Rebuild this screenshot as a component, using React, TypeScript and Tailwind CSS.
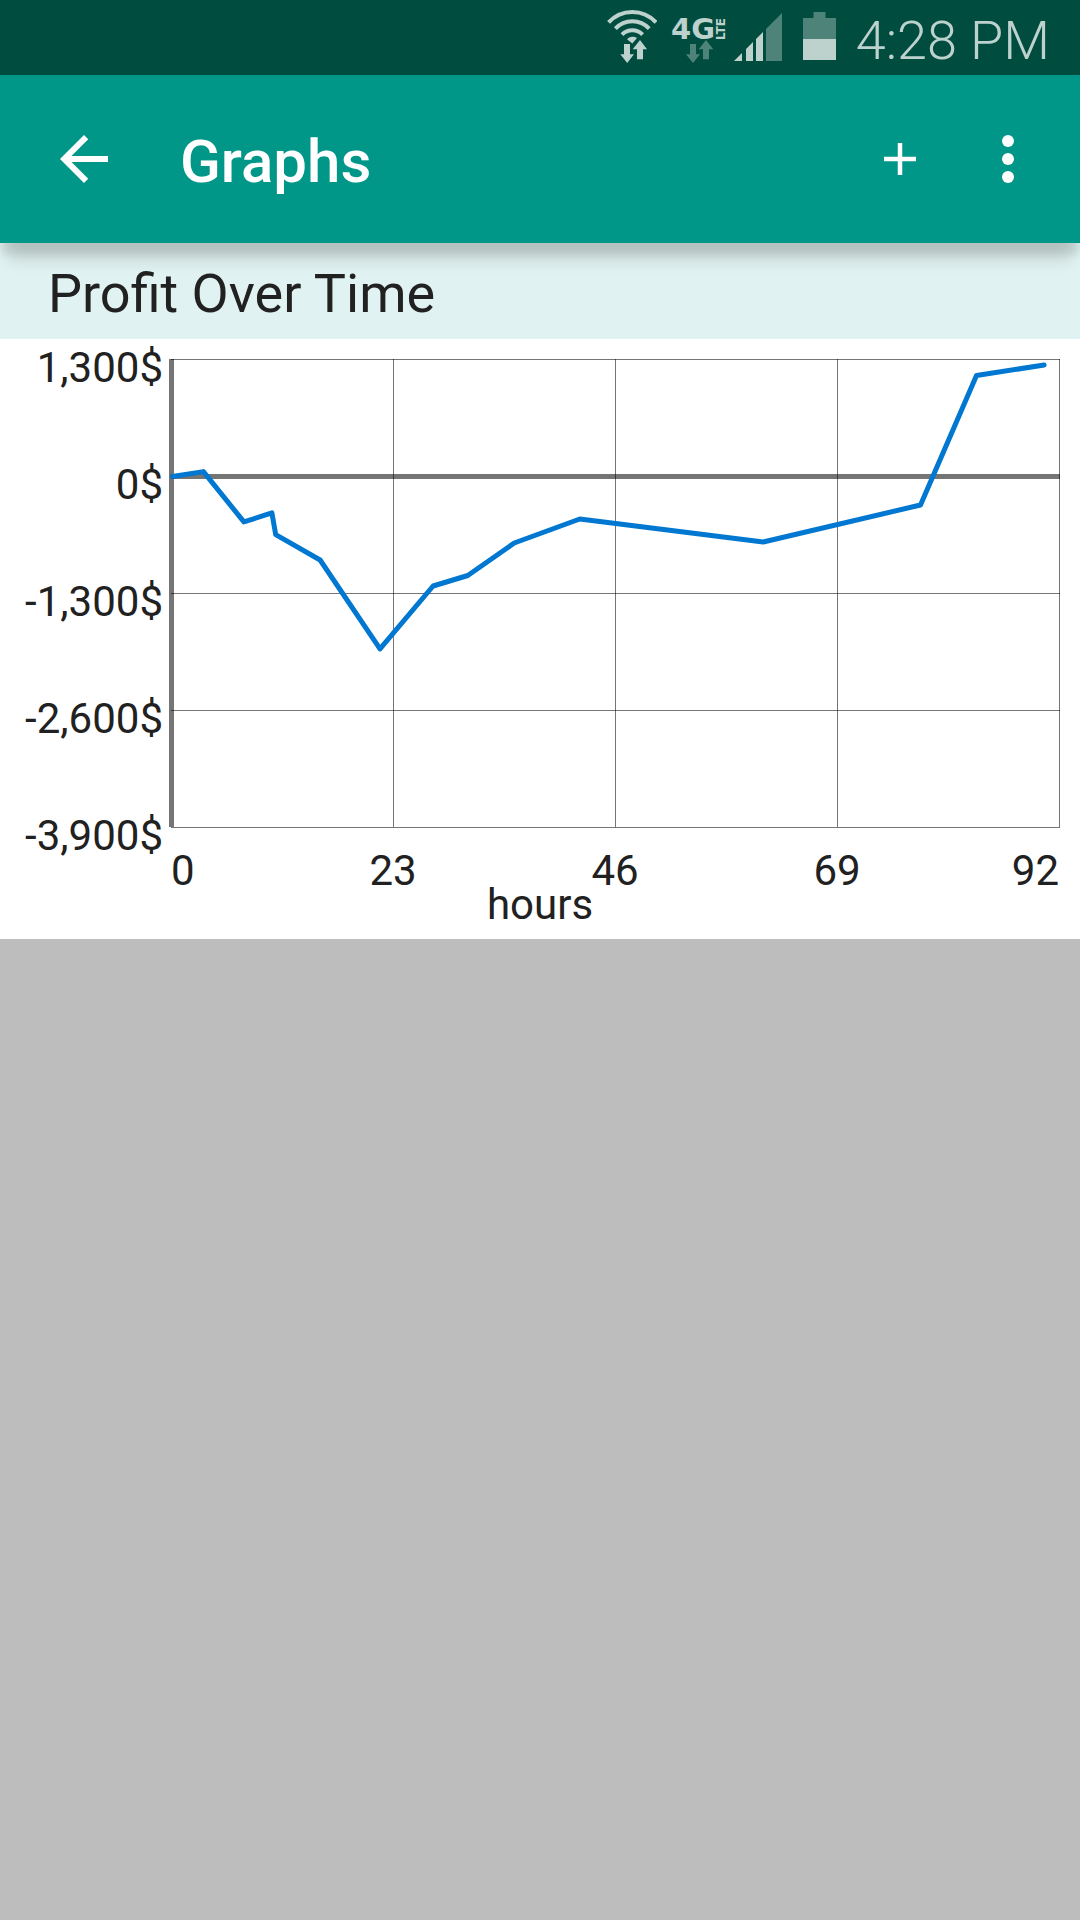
const points: [number, number][] = [
  [0.1, 0],
  [3.3, 55],
  [7.5, -505],
  [10.4, -405],
  [10.8, -645],
  [15.4, -928],
  [21.6, -1916],
  [27.1, -1217],
  [30.7, -1100],
  [35.5, -739],
  [42.3, -472],
  [61.3, -728],
  [77.6, -317],
  [83.4, 1122],
  [90.4, 1239],
];

const yLabels = ["1,300$", "0$", "-1,300$", "-2,600$", "-3,900$"];
const xLabels = ["0", "23", "46", "69", "92"];

const PLOT_W = 888;
const PLOT_H = 468;
const toX = (hours: number) => (hours / 92) * PLOT_W + 0.5;
const toY = (dollars: number) => ((1300 - dollars) / 5200) * PLOT_H + 0.5;
const linePoints = points.map(([h, d]) => `${toX(h).toFixed(1)},${toY(d).toFixed(1)}`).join(" ");

function WifiIcon() {
  return (
    <svg aria-label="Wi-Fi" className="mr-[14px] h-[75px] w-[50px] shrink-0" viewBox="0 0 50 75" fill="none">
      <g stroke="#bdd1cd" strokeWidth="4">
        <path d="M1.6 22.4A32 32 0 0 1 49 22.4" />
        <path d="M8.4 28.6A23 23 0 0 1 42.2 28.6" />
        <path d="M15 34.7A14.3 14.3 0 0 1 35.6 34.7" />
      </g>
      <g fill="#bdd1cd">
        <path d="M20 39.3A7.5 7.5 0 0 1 30 38L25.3 43.5Z" />
        <path d="M17 44H23V54.3H27L20.2 63L13.3 54.3H17Z" />
        <path d="M33 40L40 49.3H36V59.3H30V49.3H25.7Z" />
      </g>
    </svg>
  );
}

function NetworkIcon() {
  return (
    <svg aria-label="4G LTE" className="mr-2 h-[75px] w-[55px] shrink-0 overflow-visible" viewBox="0 0 55 75">
      <g fill="#bdd1cd" fontFamily="'DejaVu Sans', sans-serif" fontWeight="700">
        <text x="0" y="39" fontSize="29">4G</text>
        <text transform="translate(54 40) rotate(-90)" fontSize="12">LTE</text>
      </g>
      <g fill="#4d8379">
        <path d="M19 44H25V54.3H29L22 63L15 54.3H19Z" />
        <path d="M35 40L42.3 49.3H38V59.3H32V49.3H27.7Z" />
      </g>
    </svg>
  );
}

function SignalIcon() {
  return (
    <svg aria-label="Signal strength" className="mr-5 h-[75px] w-[49px] shrink-0" viewBox="0 0 49 75">
      <path fill="#bdd1cd" d="M0 61L8 53V61ZM12 61V49L19 42V61ZM22 61V39L29 32V61Z" />
      <path fill="#4d8379" d="M32 61V29L48 13V61Z" />
    </svg>
  );
}

function BatteryIcon() {
  return (
    <svg aria-label="Battery" className="mr-5 h-[75px] w-[33px] shrink-0" viewBox="0 0 33 75">
      <path fill="#4d8379" d="M0 18H10.5V12H22.5V18H33V39H0Z" />
      <path fill="#bdd1cd" d="M0 39H33V60H0Z" />
    </svg>
  );
}

function StatusBar() {
  return (
    <div className="flex h-[75px] items-center justify-end bg-[#004d40] pr-[30px]">
      <WifiIcon />
      <NetworkIcon />
      <SignalIcon />
      <BatteryIcon />
      <span className="pt-[6px] text-[54px] leading-none font-light whitespace-nowrap text-[#bdd1cd]">4:28 PM</span>
    </div>
  );
}

function Toolbar() {
  return (
    <header className="relative z-10 flex h-[168px] items-center bg-[#009688] pr-9 pl-12 text-white shadow-[0_12px_8px_-1px_rgba(0,0,0,0.1),0_26px_14px_-8px_rgba(0,0,0,0.11)]">
      <button type="button" aria-label="Back" className="size-[72px] shrink-0">
        <svg className="size-full" viewBox="0 0 24 24" fill="currentColor">
          <path d="M20 11H7.83l5.59-5.59L12 4l-8 8 8 8 1.41-1.41L7.83 13H20v-2z" />
        </svg>
      </button>
      <h1 className="ml-15 flex-1 pt-[6px] text-[60px] leading-none font-medium">Graphs</h1>
      <button type="button" aria-label="Add graph" className="mr-9 size-[72px] shrink-0">
        <svg className="size-full" viewBox="0 0 72 72" stroke="currentColor" strokeWidth="4.5">
          <path d="M20 36H52M36 20V52" />
        </svg>
      </button>
      <button type="button" aria-label="More options" className="size-[72px] shrink-0">
        <svg className="size-full" viewBox="0 0 24 24" fill="currentColor">
          <circle cx="12" cy="6" r="2" />
          <circle cx="12" cy="12" r="2" />
          <circle cx="12" cy="18" r="2" />
        </svg>
      </button>
    </header>
  );
}

function Plot() {
  return (
    <svg
      role="img"
      aria-label="Profit in dollars over hours played"
      className="h-[468px] w-full overflow-visible"
      viewBox="0 0 888 468"
      preserveAspectRatio="none"
      fill="none"
    >
      <g fill="#000000" fillOpacity="0.54" shapeRendering="crispEdges">
        {[0, 117, 234, 351, 468].map((y) => (
          <rect key={y} x="0" width="889" y={y === 117 ? y - 2 : y} height={y === 117 ? 5 : 1} />
        ))}
        {[0, 222, 444, 666, 888].map((x) => (
          <rect key={x} x={x === 0 ? -2 : x} width={x === 0 ? 5 : 1} y="0" height="468" />
        ))}
      </g>
      <polyline
        points={linePoints}
        stroke="#0077d0"
        strokeWidth="5"
        strokeLinecap="round"
        strokeLinejoin="round"
        vectorEffect="non-scaling-stroke"
      />
    </svg>
  );
}

function ProfitChart() {
  return (
    <div className="bg-white pb-[17px] text-[42px] text-[#212121]">
      <div className="flex">
        <div className="w-[171px] shrink-0 pt-[5px] pr-2 text-right leading-[48px]">
          {yLabels.map((label) => (
            <div key={label} className="h-[117px] last:h-6">
              {label}
            </div>
          ))}
        </div>
        <div className="flex-1 pt-5 pr-[21px]">
          <Plot />
          <div className="mt-[27px] grid grid-cols-8 text-center leading-[34px]">
            {xLabels.map((label) => (
              <span key={label} className="col-span-2 first:col-span-1 first:text-left last:col-span-1 last:text-right">
                {label}
              </span>
            ))}
          </div>
        </div>
      </div>
      <div className="text-center leading-[34px]">hours</div>
    </div>
  );
}

export default function App() {
  return (
    <div className="min-h-screen bg-[#bdbdbd] font-['Roboto',sans-serif]">
      <StatusBar />
      <Toolbar />
      <main>
        <h2 className="flex h-24 items-center bg-[#e0f2f1] px-12 pt-[6px] text-[54px] leading-none text-[#212121]">
          Profit Over Time
        </h2>
        <ProfitChart />
      </main>
    </div>
  );
}
